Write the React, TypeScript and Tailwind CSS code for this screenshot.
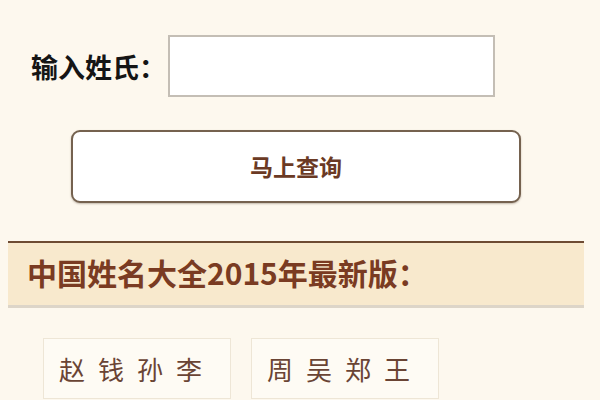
export default function App() {
  const names = [
    ["赵", "钱", "孙", "李"],
    ["周", "吴", "郑", "王"],
  ]

  return (
    <div
      className="h-[400px] w-[600px] overflow-hidden bg-[#fdf8ee]"
      style={{ fontFamily: '"Noto Sans CJK SC", "Noto Sans", sans-serif' }}
    >
      {/* 输入行 */}
      <div className="flex items-center pt-[35px] pl-[31px]">
        <label className="w-[137px] text-[27px] font-bold leading-none text-[#151515]">
          输入姓氏：
        </label>
        <input
          type="text"
          className="h-[62px] w-[327px] border-2 border-[#c4beb5] bg-white outline-none"
        />
      </div>

      {/* 查询按钮 */}
      <div className="pl-[71px] pt-[33px]">
        <button className="flex h-[73px] w-[450px] items-center justify-center rounded-[9px] border-2 border-[#75624f] bg-white text-[23px] font-bold text-[#6b3a24] shadow-[0_1px_2px_rgba(90,70,50,0.35)]">
          马上查询
        </button>
      </div>

      {/* 标题栏 */}
      <div className="mt-[38px] ml-[8px] w-[576px] border-t-2 border-b-[3px] border-t-[#6e4b33] border-b-[#ddd5c8] bg-[#f8e9cd]">
        <h2 className="flex h-[62px] items-center pb-[3px] pl-[19px] text-[30px] font-bold text-[#7a3b22]">
          中国姓名大全2015年最新版：
        </h2>
      </div>

      {/* 姓氏列表 */}
      <div className="grid grid-cols-[188px_188px] gap-x-[20px] pt-[30px] pl-[43px]">
        {names.map((row, i) => (
          <div
            key={i}
            className="flex h-[61px] items-center border border-[#eee6d6] bg-[#fefbf4] pl-[15px] text-[26px] tracking-[13px] text-[#6a4434]"
          >
            {row.join("")}
          </div>
        ))}
      </div>
    </div>
  )
}
